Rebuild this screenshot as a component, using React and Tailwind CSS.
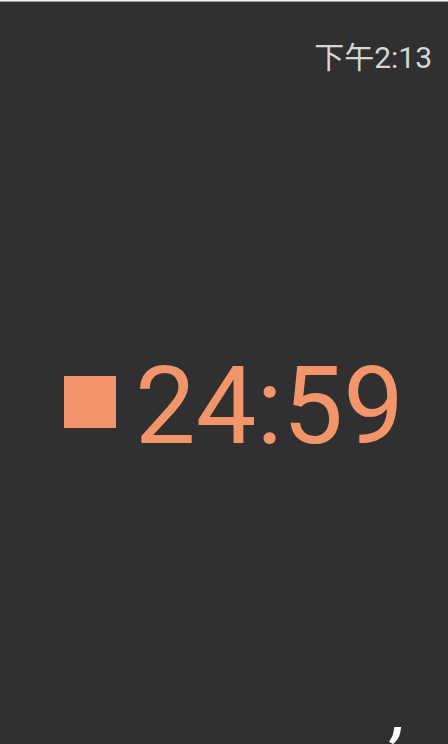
import React from 'react';

const App = () => {
    return (
        <div className="h-[744px] w-full bg-[#303030] flex flex-col overflow-hidden font-['Roboto','Noto_Sans_CJK_SC',sans-serif]">
            <div className="h-[1px] bg-[#f0f0f0]" />
            <div className="h-[1px] bg-[#9a9a9a]" />
            <div className="flex justify-end pr-4 pt-[41px]">
                <span className="text-[30px] leading-none text-[#d6d6d6]">下午2:13</span>
            </div>
            <div className="flex items-start pl-[64px] mt-[279px]">
                <div className="mt-[24px] h-[52px] w-[52px] bg-[#f3956a]" />
                <span className="ml-[19px] text-[108px] leading-none text-[#f3956a]">24:59</span>
            </div>
            <div className="flex-1" />
            <div className="flex justify-end pr-[42px] mb-[1px]">
                <span className="text-[58px] leading-none font-bold italic text-white">,</span>
            </div>
        </div>
    );
};

export default App;
